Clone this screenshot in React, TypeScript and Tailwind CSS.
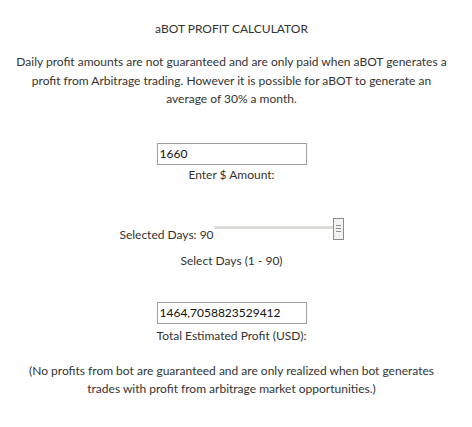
import React from "react";

export default function App() {
  return (
    <div className="w-[472px] h-[427px] bg-white">
      <div className="w-[463px] text-[#333] text-[12px] leading-[18px] text-center" style={{ fontFamily: 'Lato, "Noto Sans", Arial, sans-serif' }}>
        <div className="pt-[20px]">aBOT PROFIT CALCULATOR</div>
        <p className="mt-[15px] px-[8px] leading-[18.5px]">
          Daily profit amounts are not guaranteed and are only paid when aBOT generates a<br />
          profit from Arbitrage trading. However it is possible for aBOT to generate an<br />
          average of 30% a month.
        </p>
        <div className="mt-[34px] flex justify-center">
          <div className="w-[150px] h-[22px] border border-[#a0a0a0] pl-[2px] text-left leading-[20px] text-[#111]">1660</div>
        </div>
        <div className="mt-[1px]">Enter $ Amount:</div>
        <div className="mt-[34px] flex justify-center items-end">
          <span className="leading-[10px]">Selected Days: 90</span>
          <div className="relative w-[130px] h-[22px]">
            <div className="absolute left-0 right-[4px] top-[8px] h-[3px] bg-[#dedcd8]" />
            <div className="absolute right-0 top-0 w-[11px] h-[22px] border border-[#8c8c8c] bg-[#f2f2f2] flex flex-col items-center justify-center gap-[2px]">
              <div className="w-[5px] h-[1px] bg-[#8c8c8c]" />
              <div className="w-[5px] h-[1px] bg-[#8c8c8c]" />
              <div className="w-[5px] h-[1px] bg-[#8c8c8c]" />
            </div>
          </div>
        </div>
        <div className="mt-[12px]">Select Days (1 - 90)</div>
        <div className="mt-[32px] flex justify-center">
          <div className="w-[150px] h-[22px] border border-[#a0a0a0] pl-[2px] text-left leading-[20px] text-[#111]">1464,7058823529412</div>
        </div>
        <div className="mt-[3px]">Total Estimated Profit (USD):</div>
        <p className="mt-[17px] px-[20px]">
          (No profits from bot are guaranteed and are only realized when bot generates<br />
          trades with profit from arbitrage market opportunities.)
        </p>
      </div>
    </div>
  );
}
